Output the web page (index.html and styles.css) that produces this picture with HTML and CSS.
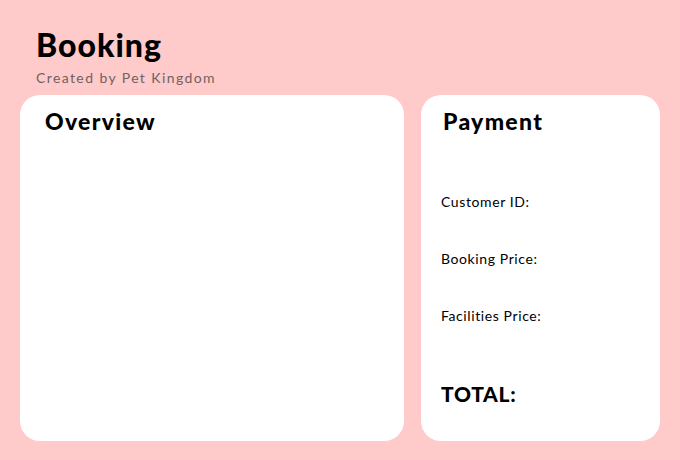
FILE: index.html
```html
<!DOCTYPE html>
<html>
<head>
<meta charset="utf-8">
<link rel="stylesheet" href="styles.css">
</head>
<body>
<div class="page">
  <header class="head">
    <h1 class="title">Booking</h1>
    <p class="subtitle">Created by Pet Kingdom</p>
  </header>
  <main class="cards">
    <section class="card overview">
      <h2 class="card-title">Overview</h2>
    </section>
    <section class="card payment">
      <h2 class="card-title">Payment</h2>
      <div class="rows">
        <p class="row">Customer ID:</p>
        <p class="row">Booking Price:</p>
        <p class="row">Facilities Price:</p>
      </div>
      <p class="total">TOTAL:</p>
    </section>
  </main>
</div>
</body>
</html>
```
FILE: styles.css
```css
* { box-sizing: border-box; }
html, body { margin: 0; padding: 0; }
body {
  width: 680px;
  height: 460px;
  background: #ffcaca;
  font-family: "Lato", "DejaVu Sans", sans-serif;
  color: #000;
  overflow: hidden;
}
.page {
  display: flex;
  flex-direction: column;
  padding: 26px 20px 0 20px;
}
.head {
  padding-left: 16px;
}
.title {
  margin: 0;
  font-size: 32px;
  font-weight: 900;
  line-height: 38px;
  letter-spacing: 1px;
}
.subtitle {
  margin: 5px 0 0 0;
  font-size: 14px;
  line-height: 18px;
  letter-spacing: 1.4px;
  color: #6e6262;
}
.cards {
  display: flex;
  gap: 17px;
  margin-top: 8px;
}
.card {
  background: #fff;
  border-radius: 20px;
  height: 346px;
}
.overview {
  width: 384px;
  padding: 12px 25px;
}
.payment {
  width: 239px;
  padding: 12px 20px;
  display: flex;
  flex-direction: column;
}
.card-title {
  margin: 0;
  font-size: 23px;
  font-weight: 900;
  line-height: 28px;
  letter-spacing: 1.3px;
}
.payment .card-title { padding-left: 2px; }
.rows {
  display: flex;
  flex-direction: column;
  gap: 39px;
  margin-top: 58px;
}
.row {
  margin: 0;
  font-size: 14px;
  line-height: 18px;
  letter-spacing: 0.6px;
}
.total {
  margin: 56px 0 0 0;
  font-size: 21px;
  font-weight: 900;
  line-height: 26px;
  letter-spacing: 0.7px;
}
```
